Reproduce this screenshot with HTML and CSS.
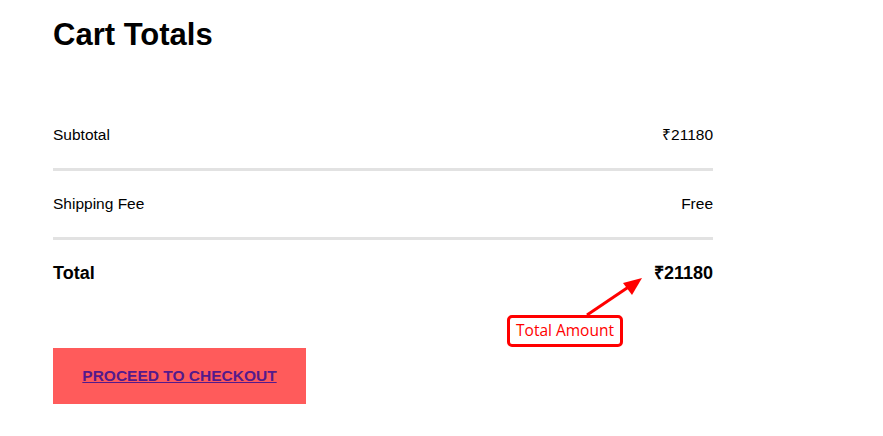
FILE: index.html
```html
<!DOCTYPE html>
<html>
<head>
<meta charset="utf-8">
<link rel="stylesheet" href="styles.css">
</head>
<body>
<div class="page">
  <section class="cart-totals">
    <h1 class="title">Cart Totals</h1>
    <div class="rows">
      <div class="row"><span>Subtotal</span><span>₹21180</span></div>
      <div class="row"><span>Shipping Fee</span><span>Free</span></div>
      <div class="row total"><span>Total</span><span>₹21180</span></div>
    </div>
    <div class="actions">
      <button class="checkout"><a href="#">PROCEED TO CHECKOUT</a></button>
    </div>
  </section>
  <div class="callout">Total Amount</div>
  <svg class="arrow" width="883" height="436" viewBox="0 0 883 436">
    <line x1="587" y1="315" x2="630" y2="286" stroke="#ff0000" stroke-width="3"/>
    <polygon points="642,278 623,283 632,295" fill="#ff0000"/>
  </svg>
</div>
</body>
</html>
```
FILE: styles.css
```css
html, body {
  margin: 0;
  padding: 0;
  background: #ffffff;
}
.page {
  position: relative;
  width: 883px;
  height: 436px;
  overflow: hidden;
  font-family: "Liberation Sans", Arial, sans-serif;
  color: #000;
}
.cart-totals {
  padding: 17px 0 0 53px;
  width: 660px;
}
.title {
  margin: 0;
  font-size: 31px;
  line-height: 36px;
  font-weight: bold;
}
.rows {
  margin-top: 49px;
}
.row {
  display: flex;
  justify-content: space-between;
  align-items: center;
  height: 66px;
  font-size: 15.5px;
  line-height: 18px;
}
.row + .row {
  border-top: 3px solid #e2e2e2;
}
.row.total {
  font-size: 18px;
  font-weight: bold;
}
.actions {
  margin-top: 42px;
}
.checkout {
  width: 253px;
  height: 56px;
  border: none;
  padding: 0;
  background: #ff5b5b;
  display: flex;
  align-items: center;
  justify-content: center;
  font-family: "Liberation Sans", Arial, sans-serif;
}
.checkout a {
  color: #551a8b;
  font-size: 15.5px;
  font-weight: bold;
  text-decoration: underline;
}
.callout {
  position: absolute;
  left: 507px;
  top: 315px;
  width: 116px;
  height: 32px;
  box-sizing: border-box;
  border: 3px solid #ff0000;
  border-radius: 5px;
  background: #fff;
  color: #ff0000;
  font-family: "Open Sans", sans-serif;
  font-size: 15.5px;
  line-height: 24px;
  padding-bottom: 2px;
  display: flex;
  align-items: center;
  justify-content: center;
}
.arrow {
  position: absolute;
  left: 0;
  top: 0;
  pointer-events: none;
}
```
